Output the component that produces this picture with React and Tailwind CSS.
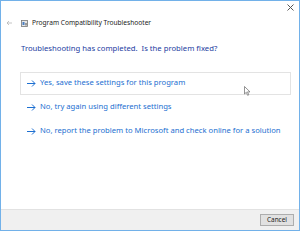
import React from 'react';

const options = [
    'Yes, save these settings for this program',
    'No, try again using different settings',
    'No, report the problem to Microsoft and check online for a solution',
];

const Arrow = () => (
    <svg width="9" height="7" viewBox="0 0 9 7" className="shrink-0">
        <path d="M0 3.5H8M5 0.5L8 3.5L5 6.5" stroke="#1c6fd1" strokeWidth="1" fill="none" />
    </svg>
);

const App = () => {
    return (
        <div className="relative w-[300px] h-[231px] bg-white border border-[#72b1e9] flex flex-col font-['Noto_Sans',sans-serif] overflow-hidden">
            {/* close button */}
            <div className="flex justify-end h-[12px] pr-[5px] pt-[3px]">
                <svg width="7" height="7" viewBox="0 0 7 7">
                    <path d="M0.5 0.5L6.5 6.5M6.5 0.5L0.5 6.5" stroke="#555" strokeWidth="1" />
                </svg>
            </div>

            {/* title row */}
            <div className="flex items-center h-[20px] pl-[5px]">
                <svg width="6" height="6" viewBox="0 0 6 6" className="mr-[9px]">
                    <path d="M6 3H1M3 1L1 3L3 5" stroke="#b5b5b5" strokeWidth="0.8" fill="none" />
                </svg>
                <svg width="7" height="7" viewBox="0 0 7 7" className="mr-[4px]">
                    <rect x="0.5" y="0.5" width="6" height="6" fill="#e8e8e8" stroke="#777" strokeWidth="0.8" />
                    <rect x="1.5" y="2" width="2" height="3" fill="#4a7fc1" />
                    <rect x="4" y="3" width="2" height="2.5" fill="#999" />
                </svg>
                <span className="text-[6.6px] text-[#222]">Program Compatibility Troubleshooter</span>
            </div>

            {/* heading */}
            <div className="pl-[20px] pt-[10px] text-[7.7px] text-[#1c3d9f]">
                Troubleshooting has completed.&nbsp; Is the problem fixed?
            </div>

            {/* options */}
            <div className="flex flex-col mt-[17px] ml-[19px] mr-[8px]">
                {options.map((text, i) => (
                    <div
                        key={i}
                        className={`flex items-center gap-[4px] h-[23px] pl-[6px] mb-[1px] border ${i === 0 ? 'border-[#e3e3e3]' : 'border-transparent'}`}
                    >
                        <Arrow />
                        <span className="text-[7.65px] text-[#1c6fd1] whitespace-nowrap">{text}</span>
                    </div>
                ))}
            </div>

            <div className="flex-1" />

            {/* footer */}
            <div className="flex justify-end items-center h-[21px] bg-[#f0f0f0] border-t border-[#e2e2e2] pr-[5px]">
                <button className="w-[34px] h-[12px] bg-[#e1e1e1] border border-[#adadad] text-[6.4px] text-[#222] leading-none">
                    Cancel
                </button>
            </div>

            {/* mouse cursor */}
            <svg width="7" height="10" viewBox="0 0 7 10" className="absolute left-[243px] top-[85px]">
                <path d="M0.5 0.5V8L2.3 6.3L3.6 9.3L4.8 8.8L3.5 5.9H6Z" fill="#fff" stroke="#666" strokeWidth="0.7" />
            </svg>
        </div>
    );
};

export default App;
